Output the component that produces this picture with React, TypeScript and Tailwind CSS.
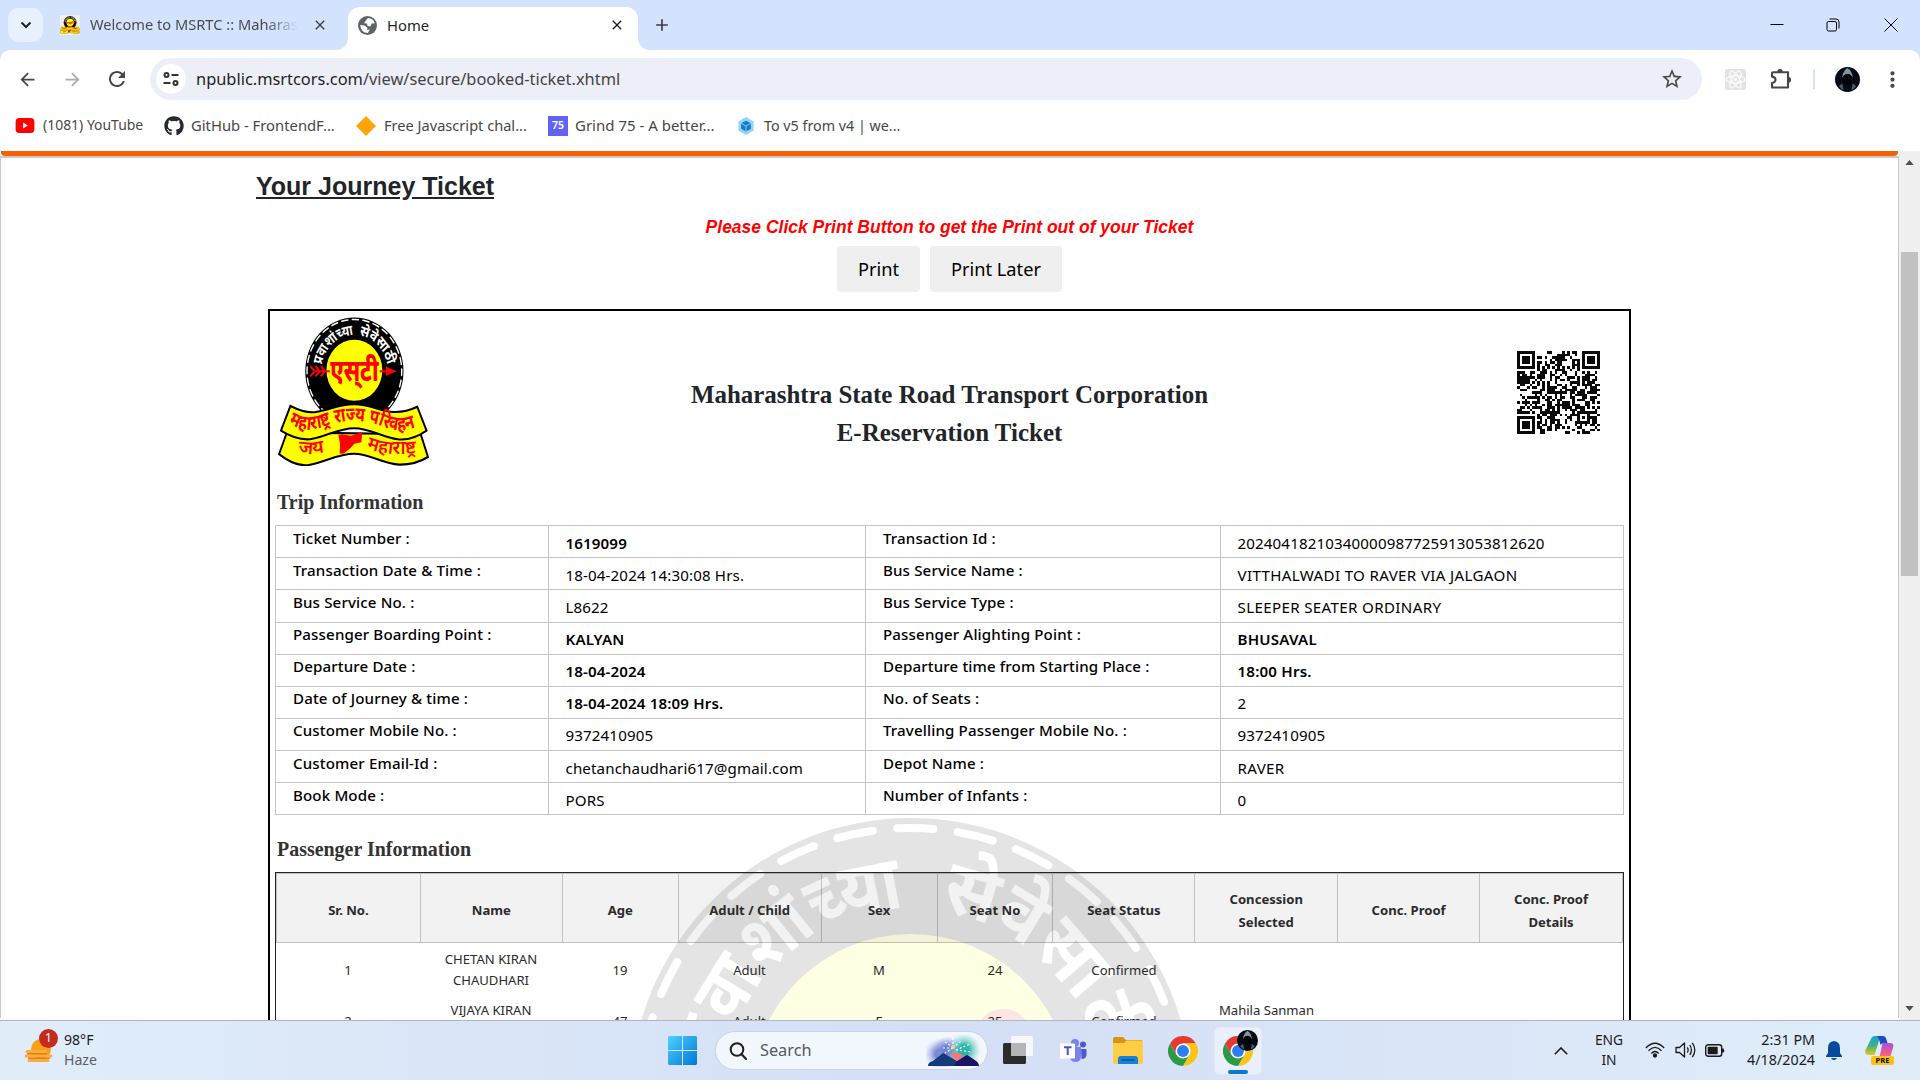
import React from 'react';
import { FaGithub } from 'react-icons/fa';
import { MdArrowBack, MdArrowForward, MdRefresh, MdStarBorder, MdPublic, MdMoreVert, MdClose, MdAdd } from 'react-icons/md';

const tripRows: [string, string, boolean, string, string, boolean][] = [
  ['Ticket Number :', '1619099', true, 'Transaction Id :', '20240418210340000987725913053812620', false],
  ['Transaction Date & Time :', '18-04-2024 14:30:08 Hrs.', false, 'Bus Service Name :', 'VITTHALWADI TO RAVER VIA JALGAON', false],
  ['Bus Service No. :', 'L8622', false, 'Bus Service Type :', 'SLEEPER SEATER ORDINARY', false],
  ['Passenger Boarding Point :', 'KALYAN', true, 'Passenger Alighting Point :', 'BHUSAVAL', true],
  ['Departure Date :', '18-04-2024', true, 'Departure time from Starting Place :', '18:00 Hrs.', true],
  ['Date of Journey & time :', '18-04-2024 18:09 Hrs.', true, 'No. of Seats :', '2', false],
  ['Customer Mobile No. :', '9372410905', false, 'Travelling Passenger Mobile No. :', '9372410905', false],
  ['Customer Email-Id :', 'chetanchaudhari617@gmail.com', false, 'Depot Name :', 'RAVER', false],
  ['Book Mode :', 'PORS', false, 'Number of Infants :', '0', false],
];

const passengerHeads = ['Sr. No.', 'Name', 'Age', 'Adult / Child', 'Sex', 'Seat No', 'Seat Status', 'Concession Selected', 'Conc. Proof', 'Conc. Proof Details'];
const passengers = [
  ['1', 'CHETAN KIRAN CHAUDHARI', '19', 'Adult', 'M', '24', 'Confirmed', '', '', ''],
  ['2', 'VIJAYA KIRAN CHAUDHARI', '47', 'Adult', 'F', '25', 'Confirmed', 'Mahila Sanman Yojana', '', ''],
];

function Emblem({ id, className }: { id: string; className: string }) {
  return (
    <svg viewBox="-437 -284 864 780" preserveAspectRatio="none" className={className} fontFamily="'Noto Sans', sans-serif">
      <defs>
        <path id={`${id}-arc`} d="M-187 -34 A190 190 0 0 1 -33 -187" />
        <path id={`${id}-arc2`} d="M28 -188 A190 190 0 0 1 187 -34" />
        <path id={`${id}-band`} d="M-376 272 C-310 315 -230 312 -160 285 Q0 235 150 285 C220 315 300 322 375 280" />
        <path id={`${id}-jay`} d="M-320 425 Q-240 445 -150 415" />
        <path id={`${id}-maha`} d="M70 402 Q190 450 375 425" />
      </defs>
      <circle r="281" fill="#000" />
      <circle r="271" fill="none" stroke="#fff" strokeWidth="8" strokeDasharray="36 24.8" strokeLinecap="round" strokeDashoffset="14" />
      <circle r="160" cy="-5" fill="#ff0" />
      <g fontSize="76" fontWeight="700" fill="#fff">
        <text>
          <textPath href={`#${id}-arc`} textLength="258" lengthAdjust="spacingAndGlyphs">प्रवाशांच्या</textPath>
        </text>
        <text>
          <textPath href={`#${id}-arc2`} textLength="238" lengthAdjust="spacingAndGlyphs">सेवेसाठी</textPath>
        </text>
      </g>
      <g stroke="#f00" strokeWidth="11" fill="none">
        <path d="M-235 0 H-140 M-252 -27 L-228 0 L-252 27 M-222 -27 L-198 0 L-222 27 M-192 -27 L-168 0 L-192 27" />
        <path d="M145 0 H185" />
      </g>
      <path d="M180 -25 L242 0 L180 25 Z" fill="#f00" />
      <text x="-138" y="50" fontSize="156" fontWeight="800" fill="#f00" textLength="276" lengthAdjust="spacingAndGlyphs">एस्‌टी</text>
      <path d="M-386 320 L-431 434 C-370 478 -310 500 -253 489 C-170 475 -90 432 -2 432 C90 432 160 485 257 489 C320 490 375 475 421 449 L380 330 Z" fill="#ff0" stroke="#000" strokeWidth="11" />
      <path d="M-366 182 C-310 208 -260 222 -213 212 C-140 200 -80 173 -2 173 C80 173 140 204 206 212 C260 218 310 208 360 186 L413 311 C360 345 300 362 247 356 C160 345 90 298 -2 298 C-90 298 -170 345 -253 356 C-310 360 -370 340 -420 311 Z" fill="#ff0" stroke="#000" strokeWidth="11" />
      <path d="M-92 333 L-70 330 L-20 338 L45 318 L40 372 L0 380 L-25 405 L-60 430 L-84 432 L-82 380 Z" fill="#f00" />
      <text fontSize="104" fontWeight="700" fill="#f00">
        <textPath href={`#${id}-band`} textLength="745" lengthAdjust="spacingAndGlyphs">महाराष्ट्र राज्य परिवहन</textPath>
      </text>
      <text fontSize="96" fontWeight="600" fill="#f00">
        <textPath href={`#${id}-jay`} textLength="150" lengthAdjust="spacingAndGlyphs">जय</textPath>
      </text>
      <text fontSize="96" fontWeight="600" fill="#f00">
        <textPath href={`#${id}-maha`} textLength="290" lengthAdjust="spacingAndGlyphs">महाराष्ट्र</textPath>
      </text>
    </svg>
  );
}

function qrPath() {
  const n = 33;
  let seed = 20240418;
  const rnd = () => {
    seed = (seed * 1103515245 + 12345) % 2147483648;
    return seed / 2147483648;
  };
  const ring = (x: number, y: number, cx: number, cy: number) => Math.max(Math.abs(x - cx), Math.abs(y - cy));
  let d = '';
  for (let y = 0; y < n; y++) {
    for (let x = 0; x < n; x++) {
      let on = rnd() < 0.5;
      if (y === 6) on = x % 2 === 0;
      if (x === 6) on = y % 2 === 0;
      const align = ring(x, y, 26, 26);
      if (align <= 2) on = align !== 1;
      for (const [cx, cy] of [[3, 3], [29, 3], [3, 29]]) {
        const r = ring(x, y, cx, cy);
        if (r <= 4) on = r !== 2 && r !== 4;
      }
      if (on) d += `M${x} ${y}h1v1h-1z`;
    }
  }
  return d;
}

function Avatar({ className }: { className: string }) {
  return (
    <svg viewBox="0 0 26 26" className={className}>
      <circle cx="13" cy="13" r="13" fill="#050b12" />
      <path d="M13 1 C9.5 3 8 7 7.5 11 L9 9.5 C10 7 16 7 17 9.5 L18.5 11 C18 7 16.500 3 13 1Z" fill="#7d98a5" />
      <path d="M4 20 L7.500 17 L9 24 Q6 23 4 20Z M22 20 L18.500 17 L17 24 Q20 23 22 20Z" fill="#3f5e73" />
      <ellipse cx="13" cy="13" rx="5" ry="6" fill="#000" />
    </svg>
  );
}

function Chrome({ className }: { className: string }) {
  return (
    <svg viewBox="-24 -24 48 48" className={className}>
      <circle r="24" fill="#fff" />
      <path d="M-20.8 -12 A24 24 0 0 1 20.8 -12 L0 -12 L-10.4 6 Z" fill="#e53a2e" />
      <path d="M20.8 -12 A24 24 0 0 1 0 24 L10.4 6 L0 -12 Z" fill="#fcc419" />
      <path d="M0 24 A24 24 0 0 1 -20.8 -12 L-10.4 6 L10.4 6 Z" fill="#2b9a47" />
      <circle r="12" fill="#fff" />
      <circle r="9.5" fill="#2d7df0" />
    </svg>
  );
}

function TabStrip() {
  return (
    <div className="flex h-[50px] shrink-0 bg-[#d3e3fd]">
      <div className="mt-2 ml-2 flex h-[34px] w-[35px] items-center justify-center rounded-[11px] bg-[#eaf1fe]">
        <svg viewBox="0 0 12 8" className="h-2 w-3 fill-none stroke-[#1f1f1f] stroke-2"><path d="M1.500 1.500 L6 6 L10.500 1.500" /></svg>
      </div>
      <div className="ml-[17px] flex w-[276px] items-center">
        <span className="flex size-5 items-center justify-center bg-[#f1efe6]"><Emblem id="fav" className="h-[18px] w-5" /></span>
        <span className="ml-[10px] w-[208px] overflow-hidden bg-gradient-to-r from-[#474747] from-85% to-transparent bg-clip-text text-[14.65px] whitespace-nowrap text-transparent">Welcome to MSRTC :: Maharas</span>
        <MdClose className="ml-[14px] size-4 text-[#3c3c3c]" />
      </div>
      <div className="flex w-[314px] items-end">
        <svg viewBox="0 0 12 12" className="size-3 shrink-0 fill-white"><path d="M12 0 V12 H0 A12 12 0 0 0 12 0Z" /></svg>
        <div className="flex h-[43px] w-[290px] shrink-0 items-center rounded-t-[12px] bg-white pb-[7px]">
          <svg viewBox="0 0 20 20" className="ml-[10px] size-[19px]"><circle cx="10" cy="10" r="10" fill="#5f6368" /><path d="M10.500 2 Q16 2.500 17.700 7.500 L14.500 8 L13 11 L10 10.500 L9.500 8 L6.500 7.500 L8 5Z" fill="#fff" /><path d="M2.200 9.500 L7 10 L10 12.500 L9.500 15 L12.500 14 L10.500 18 Q3 17.500 2.200 9.500Z" fill="#fff" /></svg>
          <span className="ml-[10px] text-[14.8px] text-[#1f1f1f]">Home</span>
          <MdClose className="ml-auto mr-[13px] size-4 text-[#1f1f1f]" />
        </div>
        <svg viewBox="0 0 12 12" className="size-3 shrink-0 fill-white"><path d="M0 0 V12 H12 A12 12 0 0 1 0 0Z" /></svg>
      </div>
      <MdAdd className="mt-[15px] ml-[2px] size-5 text-[#3c3c3c]" />
      <div className="ml-auto flex h-[50px] items-center">
        <svg viewBox="0 0 14 14" className="mr-[42px] size-[14px] stroke-black"><path d="M0.500 6.500 H13.500" /></svg>
        <svg viewBox="0 0 14 14" className="mr-[44px] size-[14px] fill-none stroke-black"><rect x="1" y="3.500" width="9.500" height="9.500" rx="1.500" /><path d="M3.500 1 H10 Q13 1 13 4 V10.500" /></svg>
        <svg viewBox="0 0 14 14" className="mr-[22px] size-[14px] fill-none stroke-black"><path d="M0.500 0.500 L13.500 13.500 M13.500 0.500 L0.500 13.500" /></svg>
      </div>
    </div>
  );
}

function Toolbar() {
  return (
    <div className="shrink-0 bg-[#d3e3fd]">
      <div className="flex h-[55px] items-center rounded-t-[10px] bg-white pt-[3px]">
        <MdArrowBack className="ml-[17px] size-[21px] text-[#474747]" />
        <MdArrowForward className="ml-[24px] size-[21px] text-[#ababab]" />
        <MdRefresh className="ml-[22px] size-[24px] text-[#474747]" />
        <div className="ml-[21px] flex h-[42px] w-[1552px] items-center rounded-full bg-[#eceef8]">
          <span className="ml-[6px] flex size-[30px] items-center justify-center rounded-full bg-white">
            <svg viewBox="0 0 16 14" className="h-[14px] w-4 fill-none stroke-[#333] stroke-2"><circle cx="3.500" cy="3" r="2" /><path d="M8.500 3 H15.500 M0.500 11 H7.500" /><circle cx="12.500" cy="11" r="2" /></svg>
          </span>
          <span className="mt-[1px] ml-[10px] text-[16.4px] text-[#444]"><span className="text-[#1f1f1f]">npublic.msrtcors.com</span>/view/secure/booked-ticket.xhtml</span>
          <MdStarBorder className="ml-auto mr-[18px] size-[24px] text-[#474747]" />
        </div>
        <svg viewBox="0 0 20 20" className="ml-[23px] size-[21px]"><rect width="20" height="20" rx="2" fill="#e3e3e3" /><g fill="none" stroke="#fff"><ellipse cx="10" cy="10" rx="9" ry="3.500" /><ellipse cx="10" cy="10" rx="9" ry="3.500" transform="rotate(60 10 10)" /><ellipse cx="10" cy="10" rx="9" ry="3.500" transform="rotate(120 10 10)" /></g><circle cx="10" cy="10" r="1.500" fill="#fff" /></svg>
        <svg viewBox="0 0 22 22" className="ml-[24px] size-[22px]"><path d="M3 4.200 H18 V19.500 H2 V15 Q5.500 14.500 5.500 11.800 Q5.500 9 2 8.600 V5.200 Q2 4.200 3 4.200Z" fill="none" stroke="#474747" strokeWidth="2.100" strokeLinejoin="round" /><path d="M7.300 4 A2.700 3 0 0 1 12.700 4Z M18.500 9 A2.600 2.800 0 0 1 18.500 14.600Z" fill="#474747" /></svg>
        <span className="ml-[21px] h-5 w-[2px] bg-[#d3e3fd]" />
        <Avatar className="ml-[20px] size-[25px]" />
        <MdMoreVert className="ml-[20px] size-[25px] text-[#474747]" />
      </div>
      <div className="flex h-[46px] items-center bg-white pb-[5px] text-[14.6px] whitespace-nowrap text-[#474747]">
        <svg viewBox="0 0 20 16" className="ml-[15px] h-[15px] w-5"><rect width="20" height="16" rx="4" fill="#f00" /><path d="M8 4.800 V11.200 L13 8Z" fill="#fff" /></svg>
        <span className="ml-2 w-[101px] text-[13.95px]">(1081) YouTube</span>
        <FaGithub className="ml-5 size-5 text-[#24292f]" />
        <span className="ml-[7px] w-[145px] text-[14.8px]">GitHub - FrontendF...</span>
        <svg viewBox="0 0 20 20" className="ml-5 size-5"><path d="M10 0 L20 10 L10 20 L0 10Z" fill="#ffa50a" /></svg>
        <span className="ml-2 w-[144px]">Free Javascript chal...</span>
        <span className="ml-5 flex size-5 items-center justify-center bg-[#6163f0] text-[10.5px] font-semibold text-white">75</span>
        <span className="ml-[7px] w-[141px] text-[15px]">Grind 75 - A better...</span>
        <svg viewBox="0 0 18 20" className="ml-[22px] h-[18px] w-4"><path d="M9 0 L17.500 5 V15 L9 20 L0.500 15 V5Z" fill="#8ed6fb" /><path d="M9 4 L14.500 7 V13 L9 16.200 L3.500 13 V7Z" fill="#1c78c0" /><path d="M3.500 7 L9 10 L14.500 7 M9 10 V16" stroke="#8ed6fb" fill="none" /></svg>
        <span className="ml-[10px] text-[14.3px]">To v5 from v4 | we...</span>
      </div>
    </div>
  );
}

function TripTable() {
  return (
    <div className="relative border-t border-l border-[#c4c4c4] text-[15.1px] leading-5 tracking-[0.14px] text-black">
      {tripRows.map(([l1, v1, b1, l2, v2, b2], i) => {
        const raised = i > 2 && i < 7;
        const label = raised ? 'border-r border-b border-[#c4c4c4] pt-[1px] pl-[17px] font-medium' : 'border-r border-b border-[#c4c4c4] pt-[2px] pl-[17px] font-medium';
        const value = raised ? 'border-r border-b border-[#c4c4c4] pt-[6px] pl-[16.5px]' : 'border-r border-b border-[#c4c4c4] pt-[7px] pl-[16.5px]';
        return (
          <div key={l1} className={i === 2 ? 'grid h-[33px] grid-cols-[273px_317px_355px_1fr] whitespace-nowrap' : 'grid h-8 grid-cols-[273px_317px_355px_1fr] whitespace-nowrap'}>
            <div className={label}>{l1}</div>
            <div className={value}><span className={b1 ? 'font-semibold' : ''}>{v1}</span></div>
            <div className={label}>{l2}</div>
            <div className={value}><span className={b2 ? 'font-semibold tracking-[0.2px]' : /^[A-Z]/.test(v2) ? 'tracking-[0.36px]' : ''}>{v2}</span></div>
          </div>
        );
      })}
    </div>
  );
}

function PassengerTable() {
  return (
    <div className="relative border border-[#212529] text-center text-[13.1px] text-[#2b2b2b]">
      <div className="grid h-[70px] grid-cols-[144fr_142fr_116fr_143fr_116fr_116fr_142fr_143fr_142fr_143fr] border-t border-l border-black/20 bg-black/5 leading-[23px] font-bold">
        {passengerHeads.map((h) => (
          <div key={h} className="flex items-center justify-center border-r border-b border-black/20 px-6 pt-[5px]"><span>{h}</span></div>
        ))}
      </div>
      {passengers.map((row) => (
        <div key={row[0]} className="grid h-[51px] grid-cols-[144fr_142fr_116fr_143fr_116fr_116fr_142fr_143fr_142fr_143fr] leading-[21px]">
          {row.map((c, i) => (
            <div key={i} className="flex items-center justify-center px-5 pt-[3px]"><span>{c}</span></div>
          ))}
        </div>
      ))}
    </div>
  );
}

function Page() {
  return (
    <div className="flex min-h-0 flex-1">
      <div className="min-w-0 flex-1 overflow-hidden bg-white">
        <div className="mx-px h-[5px] rounded-b-sm bg-[#f75e05]" />
        <div className="h-[862px] border-x border-t-2 border-[#c8c8c8]">
          <h1 className="mt-[13px] ml-[255px] font-['Liberation_Sans',sans-serif] text-[25px] leading-[30px] font-bold text-[#212529] underline">Your Journey Ticket</h1>
          <p className="mt-[13px] text-center font-['Liberation_Sans',sans-serif] text-[17.5px] leading-[26px] font-bold text-[#f00] italic">Please Click Print Button to get the Print out of your Ticket</p>
          <div className="mt-[6px] flex justify-center gap-[10px] text-[18.2px] text-black">
            <button className="h-[46px] w-[83px] rounded bg-[#efefef] pt-[1px]">Print</button>
            <button className="h-[46px] w-[132px] rounded bg-[#efefef] pt-[1px]">Print Later</button>
          </div>
          <div className="relative mx-auto mt-[17px] h-[900px] w-[1363px] overflow-hidden border-2 border-black px-[5px]">
            <Emblem id="mark" className="absolute top-[504px] left-[204px] h-[780px] w-[864px] opacity-10" />
            <div className="relative flex h-[176px] justify-between">
              <Emblem id="logo" className="mt-[6px] ml-[3px] h-[149px] w-[151px]" />
              <div className="absolute inset-x-0 top-[65px] text-center font-['Liberation_Serif',serif] text-[24.95px] leading-[38px] font-bold text-[#212529]">
                <div>Maharashtra State Road Transport Corporation</div>
                <div>E-Reservation Ticket</div>
              </div>
              <svg viewBox="0 0 33 33" className="mt-[40px] mr-6 size-[83px]"><path d={qrPath()} fill="#0a0a0a" shapeRendering="crispEdges" /></svg>
            </div>
            <h2 className="relative pl-[2px] font-['Liberation_Serif',serif] text-[19.95px] leading-[30px] font-bold text-[#333]">Trip Information</h2>
            <div className="mt-2"><TripTable /></div>
            <h2 className="relative mt-[19px] pl-[2px] font-['Liberation_Serif',serif] text-[19.95px] leading-[30px] font-bold text-[#333]">Passenger Information</h2>
            <div className="mt-2"><PassengerTable /></div>
          </div>
        </div>
      </div>
      <div className="flex w-[21px] flex-col items-center bg-[#f0f0f0]">
        <svg viewBox="0 0 10 6" className="mt-[9px] h-[5px] w-[9px] fill-[#505050]"><path d="M0 6 L5 0 L10 6Z" /></svg>
        <div className="mt-[87px] h-[324px] w-[17px] bg-[#c1c1c1]" />
        <svg viewBox="0 0 10 6" className="mt-auto mb-[9px] h-[5px] w-[9px] fill-[#505050]"><path d="M0 0 L5 6 L10 0Z" /></svg>
      </div>
    </div>
  );
}

function Taskbar() {
  return (
    <div className="flex h-[60px] shrink-0 items-center border-t border-[#adb6c4] bg-gradient-to-r from-[#e0edf9] via-[#d4dff6] to-[#e0edf9]">
      <div className="relative ml-[24px] h-[36px] w-[40px]">
        <svg viewBox="0 0 30 30" className="mt-1 size-[30px]"><circle cx="17" cy="12" r="10" fill="#f9a01b" /><path d="M3 14.500 H22 M2 19 H27 M5 23.500 H24" stroke="#f9ae3c" strokeWidth="3" strokeLinecap="round" /><path d="M3 16.800 H23 M4 21.200 H26" stroke="#e9791a" strokeWidth="1.500" /></svg>
        <span className="absolute -top-[4px] left-[15px] flex size-[19px] items-center justify-center rounded-full bg-[#c42b1c] text-[12px] text-white">1</span>
      </div>
      <div className="-mt-[2px] text-[14.1px] leading-5 text-[#1b1b1b]"><div>98°F</div><div className="text-[#5c5f66]">Haze</div></div>
      <svg viewBox="0 0 29 29" className="ml-auto size-[29px]">
        <defs><linearGradient id="win" x1="0" y1="0" x2="1" y2="1"><stop offset="0" stopColor="#4fd0ff" /><stop offset="1" stopColor="#0078d8" /></linearGradient></defs>
        <path d="M1 0 H14 V14 H0 V1Z M15 0 H28 L29 1 V14 H15Z M0 15 H14 V29 H1 L0 28Z M15 15 H29 V28 L28 29 H15Z" fill="url(#win)" />
      </svg>
      <div className="ml-[18px] flex h-[39px] w-[273px] items-center rounded-full border border-[#c9d2e6] bg-[#f2f6fd]">
        <svg viewBox="0 0 18 18" className="ml-[13px] size-[18px] fill-none stroke-[#1f1f1f] stroke-2"><circle cx="8" cy="7.500" r="6.300" /><path d="M12.500 12 L17 17" strokeLinecap="round" /></svg>
        <span className="ml-[13px] text-[16.3px] text-[#555a62]">Search</span>
        <svg viewBox="0 0 54 32" className="ml-auto mr-[7px] h-8 w-[54px]">
          <defs>
            <radialGradient id="glow1"><stop offset="0.300" stopColor="#6d7fd0" /><stop offset="1" stopColor="#a9b4ea" stopOpacity="0" /></radialGradient>
            <radialGradient id="glow2"><stop offset="0.300" stopColor="#2fb5a8" /><stop offset="1" stopColor="#8fded0" stopOpacity="0" /></radialGradient>
          </defs>
          <ellipse cx="15" cy="19" rx="17" ry="16" fill="url(#glow1)" />
          <ellipse cx="22" cy="15" rx="14" ry="14" fill="url(#glow1)" />
          <ellipse cx="38" cy="15" rx="17" ry="17" fill="url(#glow2)" />
          <path d="M2 31 Q2 27 7 26 L17 18 L26 23 L31 26 L41 20 L50 26 Q53 28 53 31Z" fill="#123a7c" />
          <path d="M31 26 L41 20 L50 26 Q53 28 53 31 H28Z" fill="#1b1464" />
          <path d="M24 20 L31 26 L38 21 L31 17Z" fill="#f4777c" />
          <g stroke="#fff" strokeWidth="1.200" strokeDasharray="2 2"><path d="M27 13 L27 3 M27 13 L18 6 M27 13 L36 5 M27 13 L16 13 M30 15 L44 9 M30 15 L46 17 M27 13 L19 18" /></g>
          <circle cx="27" cy="12" r="2" fill="#f9d0a0" />
        </svg>
      </div>
      <svg viewBox="0 0 30 30" className="ml-[15px] size-[30px]"><rect y="7" width="23" height="21" rx="1.500" fill="#2c2c2c" /><rect x="8" y="0" width="22" height="20" rx="1.500" fill="#f7f8fb" /><path d="M8 7 H23 V20 H9.500 Q8 20 8 18.500Z" fill="#b4b5b8" /></svg>
      <svg viewBox="0 0 27 26" className="ml-[27px] h-[26px] w-[27px]"><circle cx="15" cy="5" r="4" fill="#7b83eb" /><circle cx="23" cy="6.500" r="3" fill="#5059c9" /><path d="M10 9 H21 V18 Q21 24 15.500 24 Q10 24 10 18Z" fill="#7b83eb" /><path d="M21 11 H26.500 V17 Q26 21 21.500 21Z" fill="#5059c9" /><rect y="5.500" width="15" height="15" rx="1" fill="#fff" /><path d="M4 9.200 H11.500 M7.700 9.200 V17" stroke="#4b53bc" strokeWidth="2" fill="none" /></svg>
      <svg viewBox="0 0 30 28" className="ml-[26px] h-7 w-[30px]"><path d="M0 2 Q0 0 2 0 H10 L13 3 H29 V12 H0Z" fill="#d9940f" /><path d="M0 6 H11 L13.500 3.500 H28 Q30 3.500 30 5.500 V25 Q30 27 28 27 H2 Q0 27 0 25Z" fill="#ffce45" /><path d="M5 27 V22 Q5 19 8 19 H22 Q25 19 25 22 V27Z" fill="#1583d6" /><path d="M8.500 23 H21.500" stroke="#0b4f93" strokeWidth="1.500" /></svg>
      <Chrome className="ml-[25px] size-[30px]" />
      <div className="relative ml-[16px] flex h-[48px] w-[48px] items-center justify-center rounded-[5px] border border-[#e4e9f5] bg-[#eaf0fb]">
        <Chrome className="mr-px size-[30px]" />
        <Avatar className="absolute top-[2px] left-[22px] size-[21px]" />
        <span className="absolute bottom-0 left-[13px] h-1 w-[20px] rounded-full bg-[#0b78d4]" />
      </div>
      <svg viewBox="0 0 14 8" className="ml-[292px] h-2 w-[14px] fill-none stroke-[#1b1b1b] stroke-[1.600]"><path d="M0.800 7.200 L7 1 L13.200 7.200" /></svg>
      <div className="-mt-[2px] ml-[26px] w-[30px] text-center text-[13.8px] leading-5 text-[#1b1b1b]"><div>ENG</div><div>IN</div></div>
      <svg viewBox="0 0 20 16" className="-mt-[2px] ml-[21px] h-4 w-5 fill-none stroke-[#1b1b1b] stroke-[1.300]"><path d="M0.800 6 Q10 -3.500 19.200 6 M3.500 8.800 Q10 2 16.500 8.800 M6.300 11.500 Q10 7.500 13.700 11.500" /><circle cx="10" cy="13.500" r="1.500" fill="#1b1b1b" /></svg>
      <svg viewBox="0 0 21 18" className="-mt-[2px] ml-[10px] h-[18px] w-[21px] fill-none stroke-[#1b1b1b] stroke-[1.300]"><path d="M1 6.500 H4.500 L9.500 2 V16 L4.500 11.500 H1Z" strokeLinejoin="round" /><path d="M12.300 6.300 Q14 9 12.300 11.700 M14.800 4 Q18 9 14.800 14 M17.300 1.800 Q22.300 9 17.300 16.200" /></svg>
      <svg viewBox="0 0 20 13" className="-mt-px ml-[9px] h-[13px] w-5"><rect x="0.700" y="0.700" width="16" height="11.600" rx="2.500" fill="none" stroke="#1b1b1b" strokeWidth="1.400" /><rect x="2.700" y="2.700" width="10" height="7.600" rx="0.800" fill="#1b1b1b" /><path d="M17 4.500 H18.500 Q20 6.500 18.500 8.500 H17Z" fill="#1b1b1b" /></svg>
      <div className="-mt-[2px] ml-5 w-[70px] text-right text-[14.3px] leading-5 text-[#1b1b1b]"><div>2:31 PM</div><div>4/18/2024</div></div>
      <svg viewBox="0 0 16 19" className="ml-[11px] h-[19px] w-4"><path d="M8 0 Q14 0.500 14 7 V12 L16 15 V16 H0 V15 L2 12 V7 Q2 0.500 8 0Z" fill="#0a4a9e" /><path d="M5 17 H11 Q10 19 8 19 Q6 19 5 17Z" fill="#0a4a9e" /></svg>
      <svg viewBox="0 0 29 29" className="mr-[26px] ml-[23px] size-[29px]">
        <defs>
          <linearGradient id="cpa" x1="0" y1="0" x2="0" y2="1"><stop offset="0" stopColor="#1aa0e8" /><stop offset="0.500" stopColor="#3fb27f" /><stop offset="1" stopColor="#e8c51a" /></linearGradient>
          <linearGradient id="cpb" x1="0" y1="0" x2="0" y2="1"><stop offset="0" stopColor="#a84fe0" /><stop offset="0.600" stopColor="#ef5a8c" /><stop offset="1" stopColor="#f58b52" /></linearGradient>
        </defs>
        <path d="M6 3 Q7 0 10 0 H19 Q14 2 13 8 L9.500 19 H4 Q-1 19 0.500 14Z" fill="url(#cpa)" />
        <path d="M12 0 H18 Q20.500 0 21.500 3.500 L22.500 7 H19 Q16.500 7 15.500 9 Q14 2 12 0Z" fill="#1b4fc4" />
        <path d="M17.500 7 H25 Q29.500 7 28 12 L25.500 20 Q24 24 21 24 H12 Q14 23 15 19Z" fill="url(#cpb)" />
        <rect x="6" y="20" width="23" height="9" rx="2" fill="#fcc410" />
        <text x="17.500" y="27.300" textAnchor="middle" fontSize="7.500" fontWeight="800" fill="#1b1b1b" fontFamily="'Noto Sans', sans-serif">PRE</text>
      </svg>
    </div>
  );
}

export default function App() {
  return (
    <div className="flex h-[1080px] w-[1920px] flex-col overflow-hidden bg-white font-['Noto_Sans',sans-serif]">
      <TabStrip />
      <Toolbar />
      <Page />
      <Taskbar />
    </div>
  );
}
